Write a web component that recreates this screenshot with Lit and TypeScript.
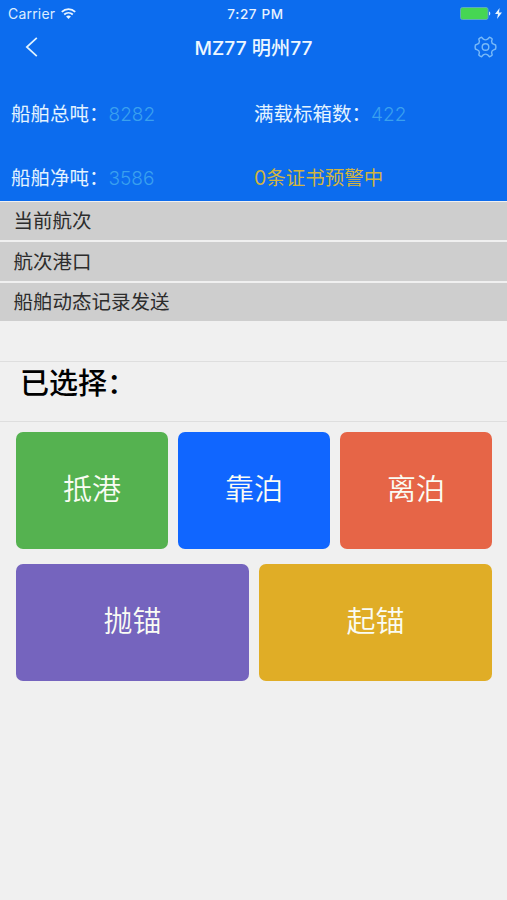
import { LitElement, html, css } from "lit";
import { customElement, property } from "lit/decorators.js";

@customElement("status-bar")
class StatusBar extends LitElement {
  static styles = css`
    :host { display: grid; grid-template-columns: 1fr auto 1fr; align-items: center; height: 27px; padding: 0 5px 0 8px; font-size: 13.5px; color: #dcecff; }
    .left { display: flex; align-items: center; gap: 6px; font-size: 14px; letter-spacing: 0.2px; font-weight: 400; }
    .time { font-weight: 500; letter-spacing: 0.65px; padding-left: 1px; color: #e8f3ff; }
    .right { display: flex; align-items: center; justify-content: flex-end; gap: 4px; }
    svg { display: block; }
  `;
  render() {
    return html`
      <div class="left">
        <span>Carrier</span>
        <svg width="15" height="11" viewBox="0 0 15 11" fill="none" stroke="#e8f4ff" stroke-width="1.8">
          <path d="M0.8 3.9C4.6 0.2 10.4 0.2 14.2 3.9" />
          <path d="M3.2 6.5C5.7 4.2 9.3 4.2 11.8 6.5" />
          <path d="M7.5 10.9L5.1 8.5C6.5 7.2 8.5 7.2 9.9 8.5Z" fill="#e8f4ff" stroke="none" />
        </svg>
      </div>
      <div class="time">7:27 PM</div>
      <div class="right">
        <svg width="31" height="13" viewBox="0 0 31 13">
          <rect x="0.5" y="0.5" width="27.5" height="12" rx="2" fill="#46d653" stroke="#5caac0" />
          <path d="M29 4.5C30.7 4.8 30.7 8.2 29 8.5Z" fill="#cfe6ff" />
        </svg>
        <svg width="7" height="11" viewBox="0 0 7 11"><path d="M4.6 0L0 6H3L2 11L7 4.6H4Z" fill="#e6f4ff" /></svg>
      </div>
    `;
  }
}

@customElement("nav-bar")
class NavBar extends LitElement {
  @property() heading = "";
  static styles = css`
    :host { display: grid; grid-template-columns: 1fr auto 1fr; align-items: center; height: 40px; margin-bottom: 1px; padding: 0 10px; }
    .back { margin-left: 15px; }
    .title { font-size: 19.2px; font-weight: 500; color: #eef7ff; white-space: nowrap; }
    .gear { justify-self: end; }
    svg { display: block; }
  `;
  render() {
    return html`
      <svg class="back" width="13" height="20" viewBox="0 0 13 20" fill="none" stroke="#e0f3ff" stroke-width="1.7"><path d="M11.8 0.8L1.8 10L11.8 19.2" /></svg>
      <div class="title">${this.heading}</div>
      <svg class="gear" width="23" height="22" viewBox="0 0 23 22" fill="none" stroke="#79baf8" stroke-width="1.4" stroke-linejoin="round">
        <path d="M7.6 1.3L9.4 3.2Q11.5 4.6 13.6 3.2L15.4 1.3Q17 1.7 18.2 3L17.6 5.4Q17.7 7.6 19.6 8.2L21.6 9Q22.2 11 21.6 13L19.6 13.8Q17.7 14.4 17.6 16.6L18.2 19Q17 20.3 15.4 20.7L13.6 18.8Q11.5 17.4 9.4 18.8L7.6 20.7Q6 20.3 4.8 19L5.4 16.6Q5.3 14.4 3.4 13.8L1.4 13Q0.8 11 1.4 9L3.4 8.2Q5.3 7.6 5.4 5.4L4.8 3Q6 1.7 7.6 1.3Z" />
        <circle cx="11.5" cy="11" r="3.3" />
      </svg>
    `;
  }
}

@customElement("app-root")
class AppRoot extends LitElement {
  static styles = css`
    :host { display: block; height: 900px; background: #f0f0f0; font-family: Inter, "Noto Sans CJK SC", sans-serif; overflow: hidden; }
    .head { height: 201px; background: #0c6cee; }
    .facts { display: grid; grid-template-columns: 243px 1fr; grid-template-rows: 64px 64px; padding: 14px 0 0 11px; font-size: 19.5px; line-height: 64px; height: 119px; color: #e3f3ff; white-space: nowrap; }
    .facts b { font-family: Inter, sans-serif; font-weight: 300; font-size: 19px; color: #3aa0ee; }
    .warn { color: #d2b440; }
    .rows { display: flex; flex-direction: column; gap: 2px; padding-top: 1px; height: 119px; }
    .row { flex: 1; display: flex; align-items: center; padding: 2px 0 0 13.5px; background: #cecece; color: #2c2c2c; font-size: 19.5px; line-height: 1; }
    .chosen { box-sizing: border-box; height: 61px; margin-top: 40px; padding-left: 20px; border: solid #dedede; border-width: 1px 0; font-size: 29px; line-height: 43px; font-weight: 500; color: #000; }
    .grid { display: flex; flex-direction: column; gap: 15px; padding: 10px 15px 0 16px; }
    .line { display: flex; gap: 10px; height: 117px; }
    .act { flex: 1; display: flex; align-items: center; justify-content: center; padding-bottom: 8px; box-sizing: border-box; border-radius: 7px; font-size: 29px; font-weight: 350; color: #fafcf4; }
    .green { background: #55b250; }
    .blue { background: #1066ff; }
    .red { background: #e66547; }
    .purple { background: #7564be; }
    .gold { background: #e0ad26; }
  `;
  private lines = [
    [["抵港", "green"], ["靠泊", "blue"], ["离泊", "red"]],
    [["抛锚", "purple"], ["起锚", "gold"]],
  ];
  render() {
    return html`
      <div class="head">
        <status-bar></status-bar>
        <nav-bar heading="MZ77 明州77"></nav-bar>
        <div class="facts">
          <div>船舶总吨：<b>8282</b></div>
          <div>满载标箱数：<b>422</b></div>
          <div>船舶净吨：<b>3586</b></div>
          <div class="warn">0条证书预警中</div>
        </div>
      </div>
      <div class="rows">
        ${["当前航次", "航次港口", "船舶动态记录发送"].map((t) => html`<div class="row">${t}</div>`)}
      </div>
      <div class="chosen">已选择：</div>
      <div class="grid">
        ${this.lines.map((l) => html`<div class="line">${l.map(([t, c]) => html`<div class="act ${c}">${t}</div>`)}</div>`)}
      </div>
    `;
  }
}
